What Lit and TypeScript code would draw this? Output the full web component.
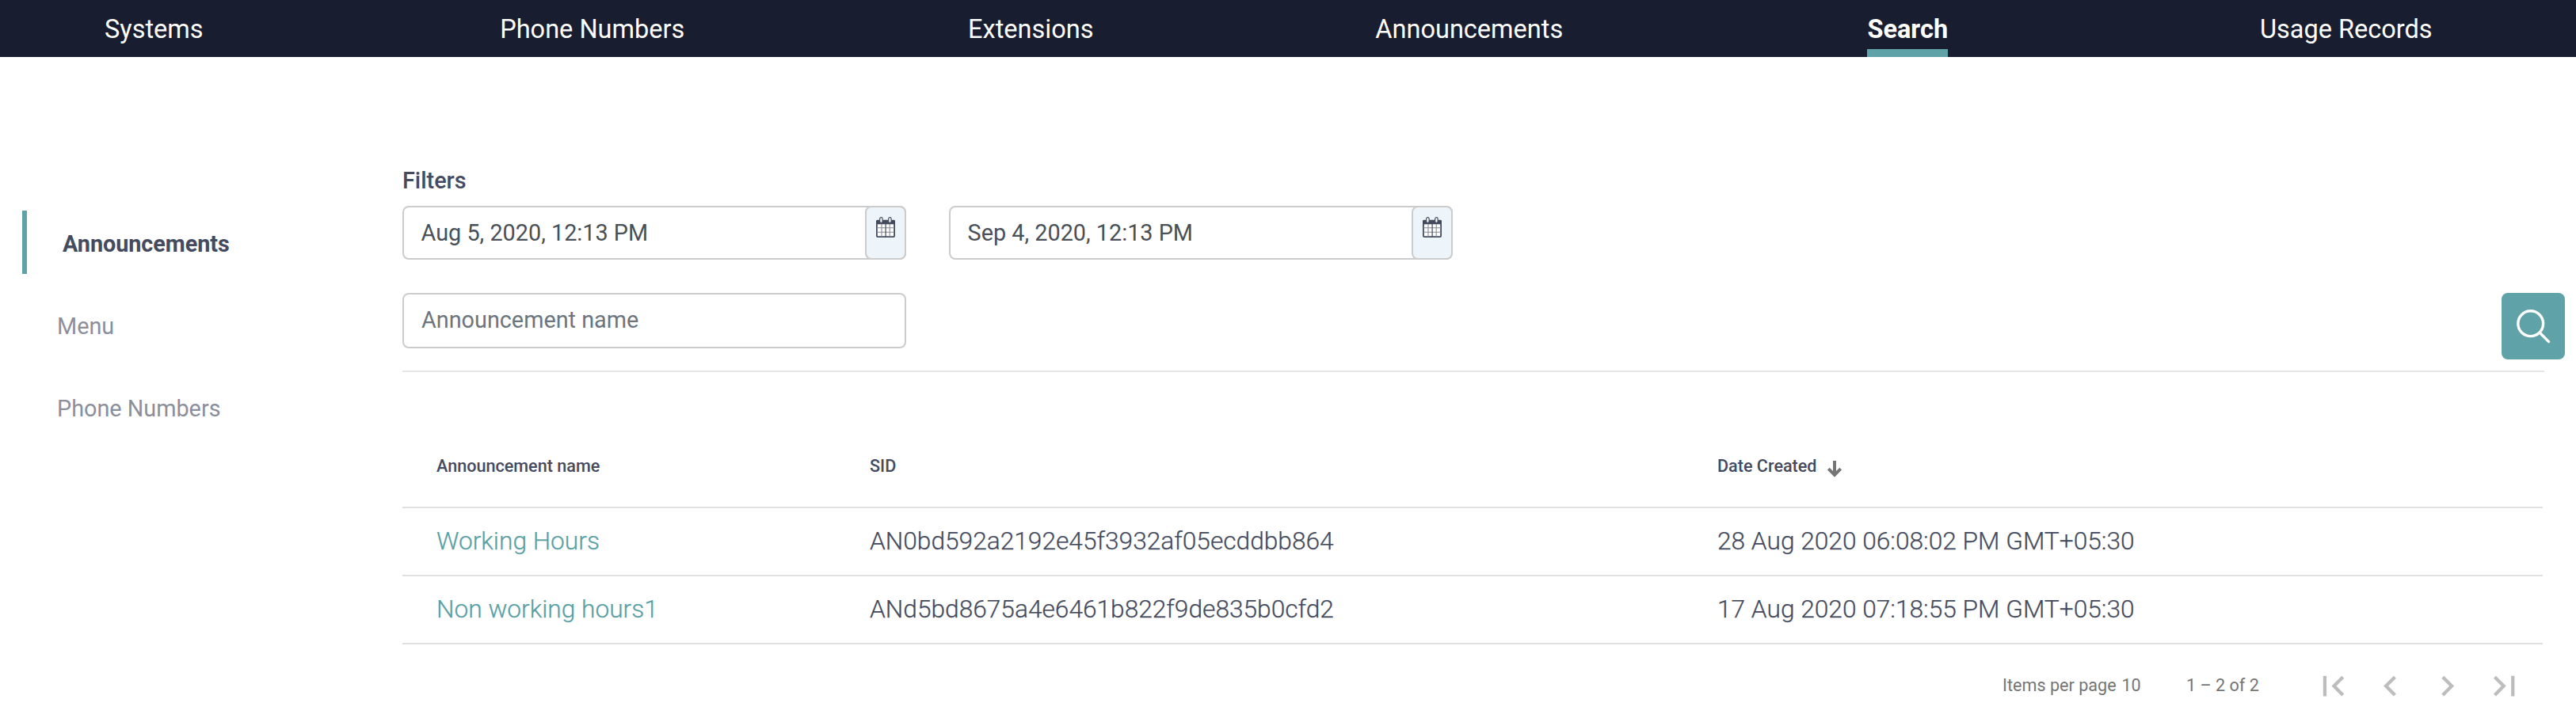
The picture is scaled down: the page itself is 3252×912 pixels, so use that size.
import { LitElement, html, css, svg } from "lit";
import { customElement, property, state } from "lit/decorators.js";
import { classMap } from "lit/directives/class-map.js";

@customElement("date-field")
class DateField extends LitElement {
  @property() value = "";

  static styles = css`
    :host {
      display: flex;
      box-sizing: border-box;
      width: 636px;
      height: 68px;
      border: 2px solid #ccc;
      border-radius: 8px;
      background: #fff;
      color: #495057;
      font-size: 28.8px;
      line-height: 64px;
    }
    .value {
      flex: 1;
      padding-left: 21.6px;
    }
    .toggle {
      display: flex;
      justify-content: center;
      align-items: flex-start;
      box-sizing: border-box;
      width: 52px;
      height: 68px;
      margin: -2px;
      padding: 12px 1px 0 0;
      border: 2px solid #ccc;
      border-radius: 8px;
      background: #edf5fb;
    }
    .calendar {
      display: block;
    }
  `;

  render() {
    return html`
      <span class="value">${this.value}</span>
      <span class="toggle">
        <svg class="calendar" width="24" height="26" viewBox="0 0 24 26">
          <rect x="0.9" y="5" width="22.2" height="20.1" rx="1" fill="#fff" stroke="#454b5e" stroke-width="1.8" />
          <path d="M0.1 9.2V5.2Q0.1 3.7 1.6 3.7H22.4Q23.9 3.7 23.9 5.2V9.2Z" fill="#454b5e" />
          <path d="M7 9V25M17.2 9V25M1 13.7H23M1 19.2H23" stroke="#858a97" stroke-width="1.1" />
          <path d="M12.1 9V25" stroke="#454b5e" stroke-width="1.2" />
          <rect x="4.7" y="0.6" width="3.4" height="6.8" rx="1.7" fill="#fff" stroke="#454b5e" stroke-width="1.2" />
          <rect x="15.7" y="0.6" width="3.4" height="6.8" rx="1.7" fill="#fff" stroke="#454b5e" stroke-width="1.2" />
        </svg>
      </span>
    `;
  }
}

const NAV = ["Systems", "Phone Numbers", "Extensions", "Announcements", "Search", "Usage Records"];
const SIDE = ["Announcements", "Menu", "Phone Numbers"];
const ROWS = [
  { name: "Working Hours", sid: "AN0bd592a2192e45f3932af05ecddbb864", date: "28 Aug 2020 06:08:02 PM GMT+05:30" },
  { name: "Non working hours1", sid: "ANd5bd8675a4e6461b822f9de835b0cfd2", date: "17 Aug 2020 07:18:55 PM GMT+05:30" },
];
const PAGER = [
  svg`<path d="M18.41 16.59L13.82 12l4.59-4.59L17 6l-6 6 6 6zM6 6h2v12H6z" />`,
  svg`<path d="M15.41 7.41L14 6l-6 6 6 6 1.41-1.41L10.83 12z" />`,
  svg`<path d="M10 6L8.59 7.41 13.17 12l-4.58 4.59L10 18l6-6z" />`,
  svg`<path d="M5.59 7.41L10.18 12l-4.59 4.59L7 18l6-6-6-6zM16 6h2v12h-2z" />`,
];

@customElement("app-root")
class AppRoot extends LitElement {
  @state() private section = "Search";
  @state() private entry = "Announcements";

  static styles = css`
    :host {
      display: block;
      height: 912px;
      overflow: hidden;
      background: #fff;
      color: #454b5e;
      font-family: Roboto, "Liberation Sans", sans-serif;
    }
    .nav {
      height: 72px;
      background: #181d2f;
    }
    .tabs {
      display: grid;
      grid-template-columns: repeat(6, 553.5px);
      justify-items: center;
      margin-left: -82.5px;
    }
    .tab {
      box-sizing: border-box;
      height: 72px;
      color: #fff;
      font-size: 32.5px;
      line-height: 75px;
      white-space: nowrap;
    }
    .tab.active {
      font-weight: 700;
      border-bottom: 10px solid #5fa2a7;
    }
    .body {
      display: flex;
    }
    .side {
      display: flex;
      flex-direction: column;
      gap: 24px;
      box-sizing: border-box;
      width: 508px;
      padding: 194px 0 0 28px;
    }
    .entry {
      height: 80px;
      padding-left: 44px;
      color: #8b8f9b;
      font-size: 28.8px;
      line-height: 84px;
    }
    .entry.active {
      padding-left: 45px;
      border-left: 6px solid #5fa2a7;
      color: #454b5e;
      font-weight: 700;
      letter-spacing: -0.06px;
    }
    .main {
      width: 2704px;
      padding-top: 136px;
    }
    .label {
      height: 52px;
      font-size: 28.8px;
      font-weight: 500;
      line-height: 40px;
    }
    .dates {
      display: flex;
      gap: 54px;
    }
    .search-row {
      display: flex;
      justify-content: space-between;
      align-items: flex-start;
      height: 98px;
      margin: 42px -26px 0 0;
    }
    .text-field {
      box-sizing: border-box;
      width: 636px;
      height: 70px;
      padding-left: 22px;
      border: 2px solid #ccc;
      border-radius: 8px;
      color: #6c757d;
      font-size: 28.8px;
      line-height: 65px;
    }
    .search-button {
      width: 80px;
      height: 84px;
      border-radius: 8px;
      background: #5fa2a7;
    }
    .search-button svg,
    .page svg,
    .arrow {
      display: block;
    }
    .table {
      border-top: 2px solid #e5e5e5;
    }
    .row {
      display: grid;
      grid-template-columns: 547px 1070px 1fr;
      height: 84px;
      margin-right: 2px;
      padding-left: 43px;
      border-bottom: 2px solid #e0e0e0;
      font-size: 31.68px;
      font-weight: 300;
      line-height: 83px;
      -webkit-text-stroke: 0.25px currentColor;
    }
    .head {
      height: 64px;
      padding-top: 106px;
      font-size: 21.6px;
      font-weight: 500;
      line-height: 26px;
      -webkit-text-stroke: 0;
    }
    .head .cell {
      display: flex;
      align-items: flex-start;
      gap: 12px;
    }
    .arrow {
      margin-top: 6px;
    }
    .link {
      color: #57a0a4;
    }
    .pager {
      display: flex;
      align-items: center;
      justify-content: flex-end;
      height: 106px;
      padding-right: 25px;
      color: #757575;
      font-size: 21.6px;
      line-height: 26px;
    }
    .size {
      margin-right: 57.2px;
      padding-bottom: 3px;
    }
    .count {
      margin-left: 1.5px;
    }
    .range {
      margin-right: 47.3px;
      padding-bottom: 3px;
    }
    .page {
      width: 51.2px;
      margin-left: 20.8px;
      fill: #bdbdbd;
    }
  `;

  render() {
    return html`
      <header class="nav">
        <nav class="tabs">
          ${NAV.map(
            (name) => html`<span
              class=${classMap({ tab: true, active: name === this.section })}
              @click=${() => (this.section = name)}
              >${name}</span
            >`
          )}
        </nav>
      </header>
      <div class="body">
        <aside class="side">
          ${SIDE.map(
            (name) => html`<div
              class=${classMap({ entry: true, active: name === this.entry })}
              @click=${() => (this.entry = name)}
            >${name}</div>`
          )}
        </aside>
        <main class="main">
          <div class="label">Filters</div>
          <div class="dates">
            <date-field value="Aug 5, 2020, 12:13 PM"></date-field>
            <date-field value="Sep 4, 2020, 12:13 PM"></date-field>
          </div>
          <div class="search-row">
            <div class="text-field">Announcement name</div>
            <div class="search-button">
              <svg width="80" height="84" viewBox="0 0 80 84" fill="none" stroke="#fff" stroke-width="3.4" stroke-linecap="round">
                <circle cx="36.7" cy="38.7" r="15.9" />
                <path d="M48.2 50.2L59.6 61.6" />
              </svg>
            </div>
          </div>
          <div class="table">
            <div class="row head">
              <span class="cell">Announcement name</span>
              <span class="cell">SID</span>
              <span class="cell">Date Created
                <svg class="arrow" width="20" height="22" viewBox="0 0 20 22" fill="none" stroke="#757575" stroke-width="4">
                  <path d="M10 0V18M2.3 10.2L10 17.9L17.7 10.2" />
                </svg>
              </span>
            </div>
            ${ROWS.map(
              (r) => html`<div class="row">
                <span class="link">${r.name}</span><span>${r.sid}</span><span>${r.date}</span>
              </div>`
            )}
          </div>
          <footer class="pager">
            <span class="size">Items per page <span class="count">10</span></span>
            <span class="range">1 – 2 of 2</span>
            ${PAGER.map(
              (icon) => html`<span class="page"><svg width="51.2" height="51.2" viewBox="0 0 24 24">${icon}</svg></span>`
            )}
          </footer>
        </main>
      </div>
    `;
  }
}
